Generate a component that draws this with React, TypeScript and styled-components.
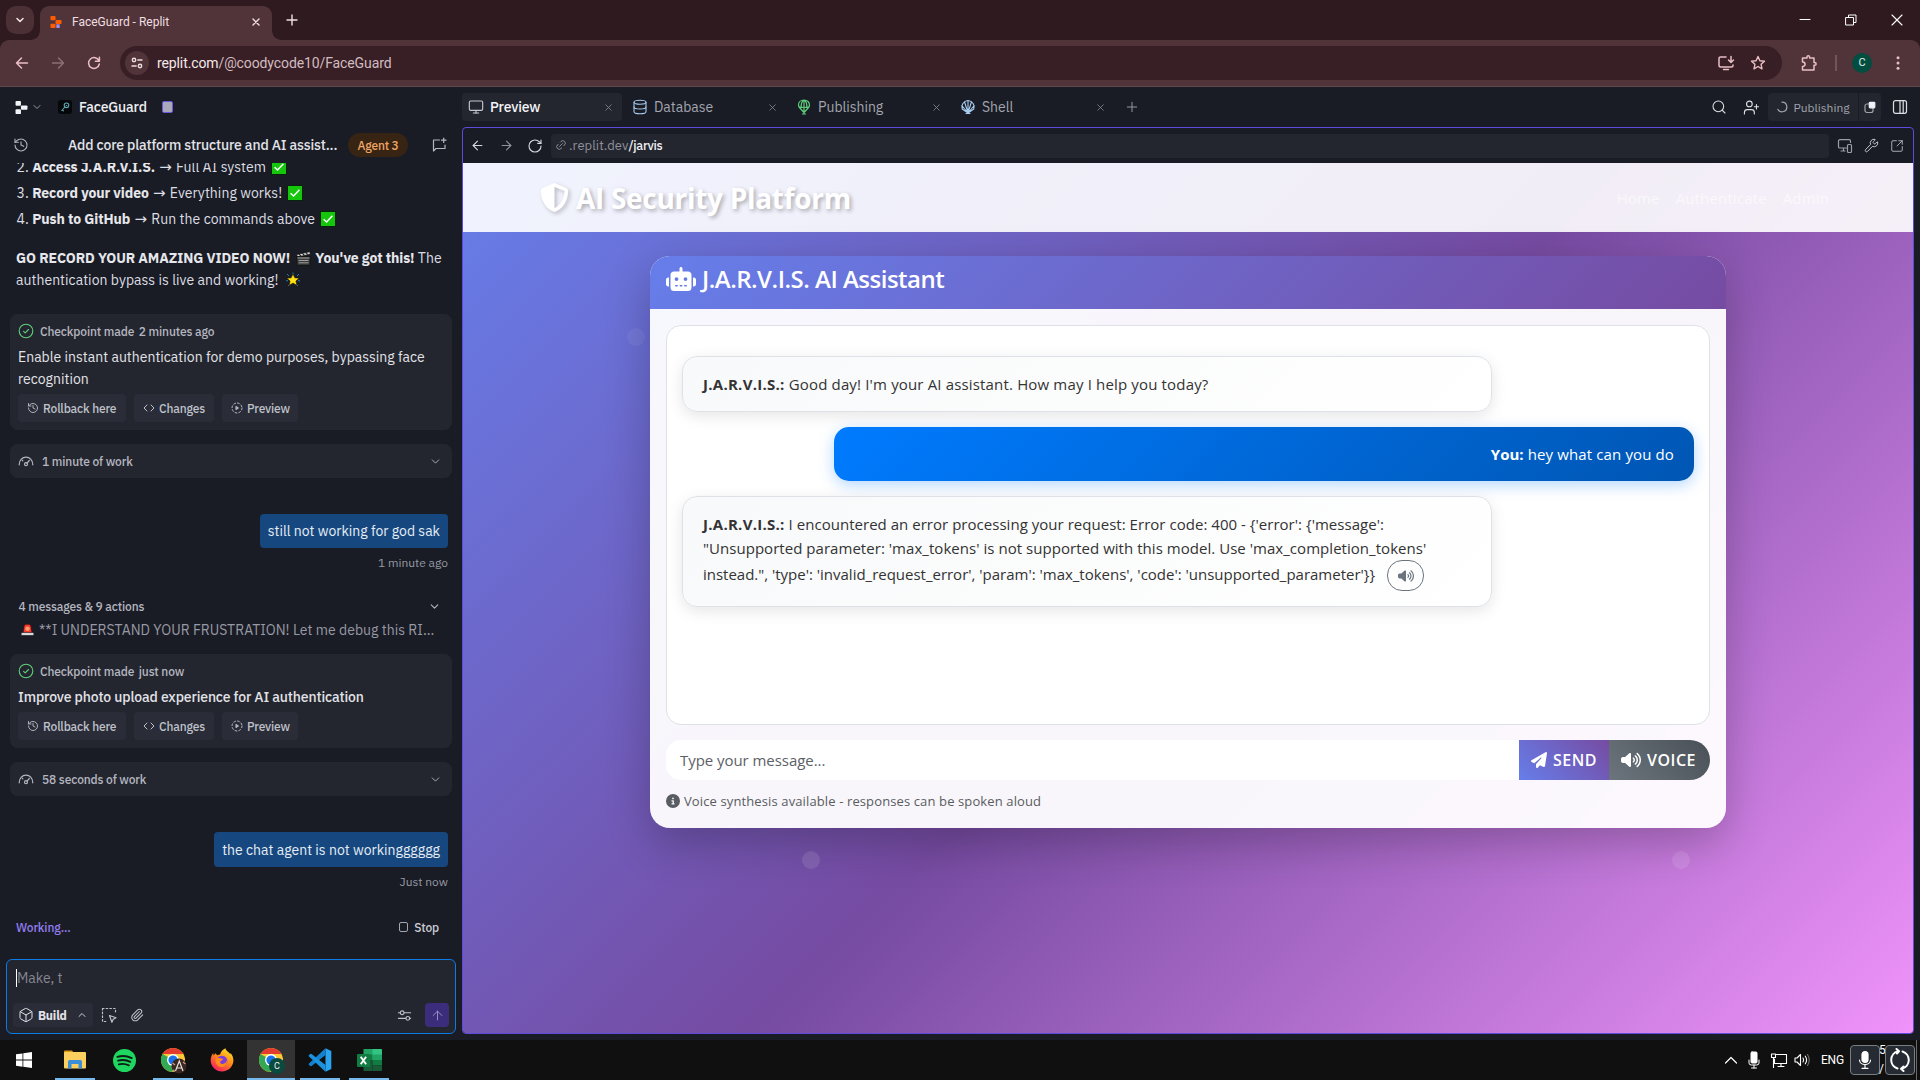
import React from 'react';
import styled, { createGlobalStyle, css } from 'styled-components';
import {
  ArrowLeft, ArrowRight, ArrowUp, Box, ChevronDown, ChevronUp, Code, Database, Link2, Monitor,
  Paperclip, Plus, RotateCw, Search, SquareArrowOutUpRight, UserPlus, Wrench, X, History,
} from 'lucide-react';
import { FaCircleInfo, FaPaperPlane, FaRobot, FaShieldHalved, FaVolumeHigh } from 'react-icons/fa6';

const plex = '"IBM Plex Sans", Roboto, "Liberation Sans", sans-serif';
const segoe = '"Segoe UI", "Open Sans", "Noto Sans", sans-serif';

const c = {
  strip: '#2f1a1f', bar: '#503439', pill: '#381f25', chromeText: '#f0dfe1', pink: '#e9bfc5',
  bg: '#1a1c25', surface: '#24262f', raised: '#2a2c37', text: '#dddee4', dim: '#b4b6c0', faint: '#9799a4',
  purple: '#5f4bdb', blue: '#16487f',
};

const Global = createGlobalStyle`
  * { box-sizing: border-box; }
  body { margin: 0; background: ${c.bg}; overflow: hidden; }
  svg { display: block; flex: none; }
  p { margin: 0; }
  button { font: inherit; border: 0; padding: 0; background: none; color: inherit; }
`;

const Screen = styled.div`
  width: 1920px; height: 1080px; display: flex; flex-direction: column; overflow: hidden;
  font-family: ${plex}; color: ${c.text};
`;
const Spacer = styled.div`flex: 1;`;
const Cell = styled.div<{ $w: number; $c?: string }>`
  width: ${p => p.$w}px; flex: none; display: flex; align-items: center; justify-content: center; color: ${p => p.$c || 'inherit'};
`;

/* ---------- browser chrome ---------- */
const TabStrip = styled.div`
  height: 40px; background: ${c.strip}; display: flex; align-items: flex-end; padding-left: 6px; color: ${c.chromeText};
`;
const TabSearch = styled.div`
  width: 28px; height: 28px; border-radius: 10px; background: #4b3036; margin: 0 6px 6px 0;
  display: flex; align-items: center; justify-content: center;
`;
const BrowserTab = styled.div`
  position: relative; width: 232px; height: 34px; background: ${c.bar}; border-radius: 9px 9px 0 0;
  display: flex; align-items: center; padding: 0 10px 2px 10px; font: 400 12px/16px Roboto, sans-serif;
  &::before, &::after { content: ''; position: absolute; bottom: 0; width: 9px; height: 9px; }
  &::before { left: -9px; background: radial-gradient(circle at 0 0, transparent 8.5px, ${c.bar} 9px); }
  &::after { right: -9px; background: radial-gradient(circle at 100% 0, transparent 8.5px, ${c.bar} 9px); }
  span { margin-left: 10px; flex: 1; }
`;
const WindowButtons = styled.div`display: flex; height: 40px; align-items: center; color: #fff;`;
const Toolbar = styled.div`
  height: 47px; background: linear-gradient(${c.strip}, ${c.strip}) top / 100% 9px no-repeat, ${c.bar};
  border-bottom: 1px solid #5d474b;
`;
const ToolbarInner = styled.div`
  height: 46px; background: ${c.bar}; border-radius: 9px 9px 0 0; display: flex; align-items: center; padding-left: 4px; color: ${c.pink};
`;
const Omnibox = styled.div`
  width: 1662px; height: 34px; margin-left: 8px; border-radius: 17px; background: ${c.pill}; display: flex; align-items: center;
  padding: 0 8px 0 5px; font: 400 14px/20px Roboto, sans-serif; letter-spacing: -0.11px; color: #d2bcc0;
  b { font-weight: 400; color: #f6e9ea; }
`;
const SiteInfo = styled.div`
  width: 24px; height: 24px; border-radius: 50%; background: #503439; display: flex; align-items: center; justify-content: center; margin-right: 8px; color: #eedde0;
`;
const Avatar = styled.div`
  width: 20px; height: 20px; border-radius: 50%; background: #014d40; color: #e3efec; font: 400 11px/20px Roboto, sans-serif; text-align: center;
`;
const Divider = styled.div`width: 2px; height: 16px; background: #73545a;`;

/* ---------- workspace ---------- */
const Workspace = styled.div`height: 953px; background: ${c.bg}; display: flex; flex-direction: column;`;
const TopBar = styled.div`height: 40px; display: flex; align-items: center;`;
const Project = styled.div`
  width: 462px; display: flex; align-items: center; padding-left: 15px; font-size: 14px; font-weight: 500; letter-spacing: -0.15px; color: #eeeff3;
  em { font-style: normal; width: 68px; margin: 0 15px 0 7px; }
`;
const ProjectIcon = styled.div`width: 14px; height: 14px; border-radius: 3px; background: #05070a; margin-left: 12px; display: flex; align-items: center; justify-content: center; color: #5da5ae;`;
const Chip = styled.div`width: 11px; height: 12px; border: 1.5px solid #6b58d8; border-radius: 2px; background: #a9a9ba;`;
const Tab = styled.div<{ $on?: boolean; $c?: string }>`
  width: 160px; height: 28px; margin-right: 4px; padding: 0 8px 0 6px; border-radius: 4px; display: flex; align-items: center;
  background: ${p => (p.$on ? c.surface : 'transparent')}; color: ${p => (p.$on ? '#f4f5f8' : '#a3a5af')};
  font-size: 14px; font-weight: ${p => (p.$on ? 500 : 400)}; letter-spacing: ${p => (p.$on ? -0.15 : -0.03)}px;
  > svg:first-child { color: ${p => p.$c || '#c5c7d0'}; }
  > svg:last-child { color: #858792; }
  span { margin-left: 6px; flex: 1; }
`;
const PublishGroup = styled.div`display: flex; gap: 1px; height: 28px; margin: 0 11px 0 0;`;
const PublishPart = styled.div<{ $w: number; $side: 'l' | 'r' }>`
  width: ${p => p.$w}px; background: ${c.surface}; display: flex; align-items: center; justify-content: center; gap: 5px;
  border-radius: ${p => (p.$side === 'l' ? '4px 0 0 4px' : '0 4px 4px 0')}; font-size: 12px; color: #a0a2ad;
`;
const Columns = styled.div`display: flex; height: 913px;`;

/* ---------- chat column ---------- */
const Side = styled.div`width: 462px; flex: none; display: flex; flex-direction: column;`;
const SideHead = styled.div`
  height: 36px; flex: none; display: flex; align-items: center; padding: 0 15px 0 13px; color: ${c.dim};
  strong { font-size: 14px; font-weight: 500; letter-spacing: -0.15px; color: #e2e3e9; margin: 0 10px 0 39px; width: 270px; white-space: nowrap; }
`;
const AgentBadge = styled.div`width: 60px; height: 24px; border-radius: 12px; background: #382413; color: #efa566; font: 500 12px/25px ${plex}; letter-spacing: -0.2px; text-align: center;`;
const Feed = styled.div`height: 796px; overflow: hidden; padding: 0 10px;`;
const Steps = styled.div`margin-top: -7px;`;
const Line = styled.div`
  display: flex; align-items: center; height: 22px; margin-bottom: 4px; padding-left: 6.5px; font-size: 14px; white-space: pre;
  b { font-weight: 700; letter-spacing: -0.08px; color: #e6e7ec; }
  span { letter-spacing: 0.05px; }
  i { font: 15px "DejaVu Sans", sans-serif; width: 14px; margin: 0 3.5px; display: flex; justify-content: center; }
  svg { margin-left: 5px; }
`;
const Para = styled.div`
  margin: 17px 0 23px; padding-left: 6px; font-size: 14px; line-height: 22px; white-space: nowrap; letter-spacing: 0.03px;
  div { display: flex; align-items: center; height: 22px; }
  b { font-weight: 700; letter-spacing: -0.08px; color: #e6e7ec; }
  svg { margin: 0 4px 0 6px; }
`;
const Card = styled.div`background: ${c.surface}; border-radius: 8px; padding: 8px; height: max-content;`;
const CardHead = styled.div`display: flex; align-items: center; height: 18px; font-size: 12px; font-weight: 500; letter-spacing: -0.12px; color: ${c.dim}; white-space: pre; svg { margin-right: 6px; } span { margin-left: 4.5px; }`;
const CardText = styled.p<{ $strong?: boolean }>`margin: 6px 0 4px; font-size: 14px; line-height: 22px; letter-spacing: ${p => (p.$strong ? -0.13 : 0.01)}px; font-weight: ${p => (p.$strong ? 500 : 400)}; color: #e2e3e8; white-space: pre-line;`;
const Actions = styled.div`display: flex; gap: 8px;`;
const Action = styled.button<{ $w: number }>`
  width: ${p => p.$w}px; height: 28px; border-radius: 4px; background: ${c.raised}; display: flex; align-items: center; padding-left: 9px; gap: 4px;
  font-size: 12px; font-weight: 500; letter-spacing: -0.14px; color: #bfc1ca;
`;
const WorkRow = styled.div`
  margin-top: 14px; height: 34px; border-radius: 8px; background: ${c.surface}; display: flex; align-items: center; padding: 0 10px 0 8px;
  font-size: 12px; font-weight: 500; letter-spacing: -0.12px; color: ${c.dim};
  span { margin-left: 8px; flex: 1; }
`;
const Bubble = styled.div<{ $h: number }>`
  width: max-content; height: ${p => p.$h}px; margin: 36px 4px 0 auto; padding: 0 8px; border-radius: 4px; background: ${c.blue}; display: flex; align-items: center;
  font-size: 14px; letter-spacing: 0; color: #e6edf5;
`;
const When = styled.div`margin: 6px 4px 0 0; height: 18px; font-size: 12px; line-height: 18px; text-align: right; color: ${c.faint};`;
const Group = styled.div`margin: 25px 11px 0 8.5px; height: 18px; display: flex; align-items: center; justify-content: space-between; font-size: 12px; font-weight: 500; letter-spacing: -0.13px; color: ${c.dim};`;
const Preview = styled.div`margin: 4px 0 13px 10px; height: 22px; display: flex; align-items: center; font-size: 14px; letter-spacing: 0.02px; color: ${c.faint}; white-space: nowrap; svg { margin-right: 4px; }`;
const Status = styled.div`
  margin: 27px 13px 0 6px; height: 18px; display: flex; align-items: center; justify-content: space-between; font-size: 12px; font-weight: 500; letter-spacing: -0.12px; color: #927cf0;
  div { display: flex; align-items: center; gap: 6px; color: #cbccd5; }
`;
const StopBox = styled.span`width: 9px; height: 10px; border: 1px solid #a3a5af; border-radius: 2px;`;
const Composer = styled.div`
  margin: 0 6px; height: 75px; border: 1px solid #0c7be6; border-radius: 6px; background: ${c.surface}; padding: 9px 6px 6px 6px; display: flex; flex-direction: column;
`;
const Draft = styled.div`height: 18px; margin-left: 3px; border-left: 1px solid #fff; font-size: 14px; line-height: 19px; color: #858792;`;
const Tools = styled.div`margin-top: 16px; height: 24px; display: flex; align-items: center; color: #bfc1ca;`;
const BuildButton = styled.button`
  width: 80px; height: 24px; border-radius: 4px; background: ${c.raised}; display: flex; align-items: center; padding: 0 5px; font-size: 12px; font-weight: 700; letter-spacing: -0.15px; color: #e2e3e8;
  span { margin-left: 4px; flex: 1; text-align: left; }
`;
const SendUp = styled.button`width: 24px; height: 24px; margin-left: 13px; border-radius: 4px; background: #3c2d7c; color: #9c93c4; display: flex; align-items: center; justify-content: center;`;

/* ---------- preview pane ---------- */
const Pane = styled.div`width: 1452px; height: 907px; border: 1px solid ${c.purple}; border-radius: 4px; overflow: hidden; display: flex; flex-direction: column;`;
const PaneBar = styled.div`height: 35px; flex: none; display: flex; align-items: center; color: #d5d6de;`;
const Address = styled.div`
  width: 1280px; height: 24px; margin-left: 2px; border-radius: 4px; background: ${c.surface}; display: flex; align-items: center; padding: 0 0 1px 4px;
  font-size: 13px; letter-spacing: 0.08px; color: #8f919c;
  span { margin-left: 2px; }
  b { font-weight: 500; font-size: 12.5px; letter-spacing: -0.3px; color: #f0f1f5; }
`;
const Site = styled.div`
  position: relative; flex: 1; background: linear-gradient(135deg, #667eea 0%, #764ba2 50%, #f093fb 100%); font-family: ${segoe};
`;
const SiteNav = styled.div`
  height: 69px; padding: 0 84px 0 77px; background: rgba(255,255,255,0.9); display: flex; align-items: center; justify-content: space-between;
`;
const Brand = styled.div`
  display: flex; align-items: center; font-size: 28px; font-weight: 700; letter-spacing: -0.3px; color: #fff; text-shadow: 2px 2px 4px rgba(0,0,0,0.3); padding-top: 1px;
  svg { margin: -1px 7px 0 0; filter: drop-shadow(2px 2px 2px rgba(0,0,0,0.22)); }
`;
const Links = styled.div`display: flex; gap: 16px; font-size: 15px; font-weight: 500; letter-spacing: 0.15px; color: rgba(255,255,255,0.6); padding-top: 1px;`;
const Dot = styled.div<{ $x: number; $y: number; $o: number }>`
  position: absolute; left: ${p => p.$x}px; top: ${p => p.$y}px; width: 18px; height: 18px; border-radius: 50%; background: rgba(255,255,255,${p => p.$o});
`;
const Assistant = styled.div`
  position: relative; margin: 24px 0 0 187px; width: 1076px; height: 572px; border-radius: 20px; background: rgba(255,255,255,0.95); box-shadow: 0 15px 45px rgba(0,0,0,0.24); overflow: hidden;
`;
const AssistantHead = styled.div`
  height: 53px; padding: 0 16px 8px; background: linear-gradient(135deg, #667eea 0%, #764ba2 100%); display: flex; align-items: center; gap: 6px;
  font-size: 24px; font-weight: 600; letter-spacing: -0.5px; color: #fff;
`;
const AssistantBody = styled.div`padding: 16px;`;
const Messages = styled.div`height: 400px; border: 1px solid #dee2e6; border-radius: 15px; background: #fff; padding: 15px; overflow: hidden;`;
const Message = styled.div<{ $mine?: boolean }>`
  margin-top: 15px; padding: 15px 20px; border-radius: 15px; font-size: 15px; line-height: 24px; white-space: pre; letter-spacing: 0.16px; color: #333;
  b { font-weight: 700; letter-spacing: 0.27px; }
  ${p => p.$mine ? css`
    margin-left: 152px; width: 860px; text-align: right; color: #fff; background: linear-gradient(135deg, #007bff, #0056b3); box-shadow: 0 4px 15px rgba(0,123,255,0.3); letter-spacing: 0.13px;
    b { letter-spacing: 0; }
  ` : css`
    width: 810px; border: 1px solid #dee2e6; background: linear-gradient(135deg, #f8f9fa, #fff); box-shadow: 0 4px 15px rgba(0,0,0,0.1);
  `}
`;
const Ln = styled.div<{ $ls: number; $lift?: number }>`letter-spacing: ${p => p.$ls}px; display: flex; align-items: center; span { padding-bottom: ${p => p.$lift || 0}px; }`;
const Speak = styled.button`width: 37px; height: 31px; margin-left: 12px; border: 1px solid #6c757d; border-radius: 15px; color: #6c757d; display: flex; align-items: center; justify-content: center;`;
const InputRow = styled.div`margin-top: 15px; height: 40px; display: flex; border-radius: 15px 20px 20px 15px; overflow: hidden;`;
const Field = styled.div`flex: 1; background: #fff; padding: 1px 14px 0; font-size: 15px; line-height: 38px; letter-spacing: -0.05px; color: #5c6167;`;
const FormButton = styled.button<{ $w: number; $from: string; $to: string }>`
  width: ${p => p.$w}px; display: flex; align-items: center; padding: 0 12px; gap: 6px; font-size: 16px; font-weight: 600; letter-spacing: 0.5px; color: #fff;
  background: linear-gradient(45deg, ${p => p.$from}, ${p => p.$to});
`;
const Note = styled.div`margin-top: 10px; height: 22px; display: flex; align-items: center; gap: 4px; font-size: 13px; letter-spacing: 0.12px; color: #595c60;`;

/* ---------- taskbar ---------- */
const Taskbar = styled.div`height: 40px; background: #101010; display: flex; align-items: stretch; color: #fff; padding-right: 3px;`;
const TaskApp = styled.div<{ $open?: boolean; $on?: boolean; $first?: boolean }>`
  width: 48px; margin-right: ${p => (p.$first ? 3 : 1)}px; display: flex; align-items: center; justify-content: center;
  background: ${p => (p.$on ? '#333' : 'transparent')};
  box-shadow: ${p => (p.$on ? 'inset 0 -2px #76b9ed' : 'none')};
  ${p => p.$open && css`background: linear-gradient(#76b9ed, #76b9ed) bottom / 40px 2px no-repeat;`}
`;
const Lang = styled.div`width: 37px; padding-left: 8px; font: 400 12px/40px Roboto, sans-serif; letter-spacing: -0.2px;`;
const TrayBox = styled.div`width: 30px; height: 30px; border: 1px solid #7b7e80; border-radius: 4px; background: #262b33; display: flex; align-items: center; justify-content: center; margin: 5px 0;`;
const Clock = styled.div`width: 5px; display: flex; flex-direction: column; justify-content: space-between; font: 12px/15px Roboto, sans-serif; padding: 3px 0; letter-spacing: -1px; div { text-indent: -1px; }`;
const ShowDesktop = styled.div`width: 1px; margin-left: 1px; background: #6a6a6a;`;

/* ---------- drawings ---------- */
const Svg = ({ s = 16, w, h, vb = '0 0 16 16', sw = 1.2, children }: any) => (
  <svg width={w || s} height={h || s} viewBox={vb} fill="none" stroke="currentColor" strokeWidth={sw} strokeLinecap="round" strokeLinejoin="round">{children}</svg>
);
const CheckEmoji = () => (
  <svg width="16" height="16" viewBox="0 0 16 16"><rect x=".5" y=".5" width="15" height="15" fill="#16c60c" stroke="#05240a" /><path d="M3.6 8.2 6.6 11 12.4 4.8" fill="none" stroke="#fff" strokeWidth="1.5" /></svg>
);
const ClapperEmoji = () => (
  <svg width="15" height="15" viewBox="0 0 15 15"><path d="M.8 3.5 13.8.7l.5 2.6L1.2 6z" fill="#ddd" stroke="#111" strokeWidth=".7" /><path d="M3 3.2l2 2M6.4 2.4l2 2M9.8 1.7l2 2" stroke="#222" strokeWidth="1.2" /><rect x="1" y="5.6" width="13" height="8.6" fill="#3b3b3b" stroke="#111" strokeWidth=".7" /><path d="M1.5 7h12M2.5 9.5h10M2.5 11.8h10" stroke="#aaa" strokeWidth=".9" /></svg>
);
const StarEmoji = () => (
  <svg width="16" height="16" viewBox="0 0 16 16"><path d="M2 2l2 2M14 2l-2 2M1 9l2-.5M15 9l-2-.5M3 14l1.5-1.5M13 14l-1.5-1.5M8 .5v1.5" stroke="#1f7fb8" strokeWidth="1" /><path d="M8 1.8l1.8 4 4.400.400-3.300 2.900 1 4.300L8 11.100l-3.900 2.300 1-4.300L1.800 6.200l4.400-.4z" fill="#ffe11a" stroke="#1a1600" strokeWidth=".6" /></svg>
);
const SirenEmoji = () => (
  <svg width="15" height="14" viewBox="0 0 15 14"><path d="M3 10 4 3.2Q4.300 1.200 6 1.200h3q1.700 0 2 2L12 10z" fill="#f03a2e" stroke="#2b0505" strokeWidth=".6" /><circle cx="7.500" cy="5.800" r="2.300" fill="#ff9a6a" /><rect x="1.200" y="9.700" width="12.600" height="2.600" fill="#d9dade" stroke="#222" strokeWidth=".5" /></svg>
);
const CheckCircle = () => <Svg s={16} sw={1.1}><circle cx="8" cy="8" r="6.800" stroke="#5fd07c" /><path d="M5.600 8.300 7.200 9.800 10.500 6.500" stroke="#5fd07c" /></Svg>;
const Gauge = () => <Svg s={16} sw={1.2}><path d="M1.200 11.800C1.200 7 4.500 4.200 8 4.200s6.800 2.800 6.800 7.600" /><circle cx="8" cy="11.200" r="1.500" /><path d="M9 10.200l2.300-2.700M4.800 7.800l-.5-.6" /></Svg>;
const PlayDashed = () => <Svg s={12} vb="0 0 24 24" sw={1.9}><circle cx="12" cy="12" r="10" strokeDasharray="3.600 4.250" /><path d="M10.500 9l4.500 3-4.500 3z" fill="currentColor" /></Svg>;
const ReplitMark = ({ a, b, s = 12 }: { a: string; b: string; s?: number }) => (
  <svg width={s} height={s} viewBox="0 0 12 12"><rect x=".5" width="5" height="4.300" rx=".8" fill={a} /><rect x="5.500" y="4.100" width="6" height="3.900" rx=".8" fill={a} /><rect x=".5" y="7.700" width="5" height="4.300" rx=".8" fill={a} />{b !== a && <rect x="6.300" y="8.200" width="3.400" height="3.800" rx=".5" fill={b} />}</svg>
);
const KeyIcon = () => <Svg s={12} vb="0 0 12 12" sw={1.1}><circle cx="7.500" cy="4.300" r="2.300" /><path d="M5.900 6 2.800 9.500M3.300 8.800l1.200 1M7.300 4.500h.4" /></Svg>;
const DevicesIcon = () => <Svg s={16}><path d="M9.500 10H2.800A1.300 1.300 0 0 1 1.500 8.700V3A1.300 1.300 0 0 1 2.800 1.700h9.400A1.300 1.300 0 0 1 13.500 3v1.500M4 13h4M6.500 10v3" /><rect x="10.500" y="6.500" width="4" height="8" rx="1" /></Svg>;
const MessagePlus = () => <Svg s={16}><path d="M8.500 3H2.500v11l2.500-2.500h9V8M12.700 1v4.500M10.500 3.200H15" /></Svg>;
const Sliders = ({ s = 16 }: { s?: number }) => <Svg s={s}><path d="M1.500 5h1.800M7.800 5h6.700M1.500 11h7.700M13.700 11h.8" /><circle cx="5.500" cy="5" r="2" /><circle cx="11.500" cy="11" r="2" /></Svg>;
const SiteSettings = () => <Svg s={14} vb="0 0 14 14" sw={1.4}><circle cx="4" cy="4" r="1.700" /><path d="M7.800 4H12M2 10h4.200" /><circle cx="10" cy="10" r="1.700" /></Svg>;
const SelectArea = () => <Svg s={17} vb="0 0 17 17" sw={1.2}><path d="M1.500 1.500h13v4M1.500 1.500v13h5" strokeDasharray="1.500 2.200" /><path d="M8.500 8.500l6.500 2.300-2.800 1.500-1.300 2.900z" /></Svg>;
const Parachute = () => <Svg s={16}><path d="M8 1C4.800 1 2.500 3.200 2.500 6 2.500 7.600 4 8.500 5 8.500s1-.5 3-.5 2 .5 3 .5 2.500-.9 2.500-2.500c0-2.800-2.300-5-5.500-5zM8 1v14M5.200 8.300C5 5 6 2 8 1c2 1 3 4 2.800 7.300M3 8l5 5.500L13 8M6.500 15h3" /></Svg>;
const ShellIcon = () => <Svg s={16} vb="0 0 16 16" sw={1.1}><path d="M8 14 2.200 10C.8 6 3.500 2 8 1.500c4.500.5 7.200 4.500 5.800 8.500zM8 14V1.500M8 14 4.600 3M8 14l3.400-11M8 14 1.800 6.500M8 14l6.200-7.500M6 14.500h4" /></Svg>;
const CopyIcon = () => <Svg s={14} vb="0 0 14 14"><rect x="2" y="4" width="8" height="8.500" rx="2" /><rect x="6.300" y="2.300" width="5.500" height="5.500" rx=".8" fill="#f2f3f7" stroke="#f2f3f7" /></Svg>;
const PanelIcon = () => <Svg s={16}><rect x="1.500" y="1.700" width="13" height="12.600" rx="2" /><path d="M8 1.700v12.600M11.200 1.700v12.600" /></Svg>;

const WinLogo = () => <svg width="16" height="16" viewBox="0 0 16 16" fill="#fff"><path d="M0 2.300 6.500 1.400V7.600H0zM7.300 1.300 16 0v7.600H7.300zM0 8.400h6.500v6.300L0 13.800zM7.300 8.400H16V16l-8.700-1.200z" /></svg>;
const Explorer = () => <svg width="22" height="20" viewBox="0 0 22 20"><path d="M0 1.500Q0 .5 1 .5h7l2 2.500H0z" fill="#d99a12" /><rect y="2" width="22" height="16.500" rx="1" fill="#fbd05f" /><path d="M4 18.500v-7q0-1.500 1.500-1.500h11q1.500 0 1.500 1.500v7h-3.500V14h-7v4.500z" fill="#3b8fd6" /></svg>;
const Spotify = () => <svg width="23" height="23" viewBox="0 0 24 24"><circle cx="12" cy="12" r="12" fill="#1ed760" /><path d="M4.500 8.200c5-1.500 10.500-1 15 1.300M5.300 12.200c4.300-1.200 9-.8 12.800 1.200M6 16c3.500-.9 7.300-.6 10.500 1.100" stroke="#0c1c12" strokeWidth="1.900" fill="none" strokeLinecap="round" /></svg>;
const ChromeLogo = ({ badge }: { badge: 'photo' | 'letter' }) => (
  <svg width="28" height="28" viewBox="0 0 28 28">
    <circle cx="14" cy="14" r="12" fill="#fcc934" />
    <path d="M3.600 8A12 12 0 0 1 24.400 8H14z" fill="#e33b2e" />
    <path d="M14 14 3.600 8A12 12 0 0 0 13 26l4.500-8z" fill="#34a853" />
    <path d="M3.600 8 9 17l5-9z" fill="#e33b2e" opacity="0" />
    <circle cx="14" cy="14" r="6" fill="#fff" /><circle cx="14" cy="14" r="4.600" fill="#1a73e8" />
    {badge === 'letter' ? <><circle cx="20" cy="20" r="8" fill="#0a4a3f" /><text x="20" y="23.300" fontSize="9" fontFamily="Roboto, sans-serif" fill="#e8f2f0" textAnchor="middle">C</text></>
      : <><circle cx="20" cy="20" r="7.500" fill="#3a2722" /><path d="M16.500 25l3.800-10 3.700 10M18 22h4.500" fill="none" stroke="#e8e0dd" strokeWidth="1.200" /><path d="M13.500 17l2.500 2M24 16l2.500 2M14 24l2 1.500" stroke="#c69a80" strokeWidth="1.400" /></>}
  </svg>
);
const Firefox = () => (
  <svg width="24" height="24" viewBox="0 0 24 24">
    <defs><linearGradient id="ff" x1=".8" y1="0" x2=".2" y2="1"><stop offset="0" stopColor="#ffe226" /><stop offset=".45" stopColor="#ff8a16" /><stop offset="1" stopColor="#f5156c" /></linearGradient></defs>
    <path d="M12 23.500C5.600 23.500.7 18.500.7 12.500c0-3 1-5.700 2.600-7.500L3.600 7.500 5.500 5.200l1.700 2.100c1-.6 2-.8 2.900-.8C11 3.500 13 1.200 15.500.3c.3 2.700 3.300 3.400 4.700 6L20.500 5c2 2.200 2.900 4.800 2.900 7.300 0 6.200-5 11.200-11.400 11.200z" fill="url(#ff)" />
    <circle cx="12" cy="13" r="5.300" fill="#7a3ee0" /><path d="M5.500 11c2-2 5-.5 6.500-.5 1.500 0 1 1.800-1 2.200-1 .8-1.500 2.300 1 3.300 3 0 4.500-2 4.800-4 .8 4.500-2.300 7-5.300 7S5 16.500 5.500 11z" fill="#ff8c1a" />
  </svg>
);
const VSCode = () => <svg width="24" height="24" viewBox="0 0 24 24"><path d="M17.500.3 23.300 3v18l-5.800 2.700z" fill="#2aa3f0" /><path d="M17.500.3 1 15.400q-.8.800 0 1.500l1.300 1.200q.6.400 1.300 0L17.500 7z" fill="#1281cf" /><path d="M17.500 23.700 1 8.600q-.8-.8 0-1.500l1.300-1.200q.6-.4 1.300 0L17.500 17z" fill="#1b92de" /></svg>;
const Excel = () => (
  <svg width="25" height="22" viewBox="0 0 25 22"><path d="M6.500 0H16v11H6.500z" fill="#21a366" /><path d="M15.500 0H24q1 0 1 1v5h-9.500z" fill="#33c481" /><path d="M6.500 5.500h9V11h-9z" fill="#107c41" /><path d="M15.500 5.500H25V11h-9.500z" fill="#21a366" /><path d="M6.500 11h9v11h-9z" fill="#185c37" /><path d="M15.500 11H25v5.500h-9.500z" fill="#107c41" /><path d="M15.500 16.500H25V21q0 1-1 1h-8.500z" fill="#185c37" /><rect y="5" width="13" height="13" rx="1" fill="#107c41" /><path d="M3.700 7.800l5.400 7.400M9.100 7.800l-5.400 7.400" stroke="#fff" strokeWidth="1.900" /></svg>
);

const CardActions = () => (
  <Actions>
    <Action $w={108}><History size={12} strokeWidth={1.8} />Rollback here</Action>
    <Action $w={80}><Code size={12} strokeWidth={2} />Changes</Action>
    <Action $w={76}><PlayDashed />Preview</Action>
  </Actions>
);

const steps = [
  ['2.', 'Access J.A.R.V.I.S.', 'Full AI system'],
  ['3.', 'Record your video', 'Everything works!'],
  ['4.', 'Push to GitHub', 'Run the commands above'],
];

const BrowserChrome = () => (
  <>
    <TabStrip>
      <TabSearch><Svg s={10} vb="0 0 10 10" sw={1.6}><path d="M2 3.500l3 3 3-3" /></Svg></TabSearch>
      <BrowserTab>
        <ReplitMark a="#ff5c00" b="#9f8df0" /><span>FaceGuard - Replit</span>
        <Svg s={12} vb="0 0 12 12" sw={1.4}><path d="M3 3l6 6M9 3 3 9" /></Svg>
      </BrowserTab>
      <Cell $w={40}><Svg s={40} vb="0 0 40 40" sw={1.4}><path d="M20 15v10M15 20h10" /></Svg></Cell>
      <Spacer />
      <WindowButtons>
        <Cell $w={46}><Svg s={12} vb="0 0 12 12" sw={1}><path d="M1 5.500h10" /></Svg></Cell>
        <Cell $w={46}><Svg s={12} vb="0 0 12 12" sw={1}><path d="M1 3.500h7.500V11H1zM3.500 3.500V1H11v7.500H8.500" /></Svg></Cell>
        <Cell $w={46}><Svg s={12} vb="0 0 12 12" sw={1.1}><path d="M1 1l10 10M11 1 1 11" /></Svg></Cell>
      </WindowButtons>
    </TabStrip>
    <Toolbar>
      <ToolbarInner>
        <Cell $w={36}><Svg s={16} sw={1.5}><path d="M13.500 8H2.500M7.500 3 2.500 8l5 5" /></Svg></Cell>
        <Cell $w={36} $c="#8d6f75"><Svg s={16} sw={1.5}><path d="M2.500 8h11M8.500 3l5 5-5 5" /></Svg></Cell>
        <Cell $w={36}><Svg s={16} sw={1.5}><path d="M13 6A5.400 5.400 0 1 0 13.300 9M13.400 2.200v4h-4" /></Svg></Cell>
        <Omnibox>
          <SiteInfo><SiteSettings /></SiteInfo>
          <span><b>replit.com</b>/@coodycode10/FaceGuard</span>
          <Spacer />
          <Cell $w={32} $c={c.pink}><Svg s={18} vb="0 0 18 18" sw={1.5}><path d="M9 3H3.500A1.500 1.500 0 0 0 2 4.500v7A1.500 1.500 0 0 0 3.500 13h11a1.500 1.500 0 0 0 1.500-1.500V11M6.500 15.500h5M14 2.500v6M11.500 6 14 8.500 16.500 6" /></Svg></Cell>
          <Cell $w={32} $c={c.pink}><Svg s={16} sw={1.4}><path d="M8 1.500l1.900 4.200 4.600.5-3.400 3.100.900 4.500L8 11.500l-4 2.300.900-4.500L1.500 6.200l4.600-.5z" /></Svg></Cell>
        </Omnibox>
        <Cell $w={53}><Svg s={18} vb="0 0 18 18" sw={1.5}><path d="M2.500 4H7V3a1.300 1.300 0 0 1 2.600 0v1H14v4.500h.7a1.400 1.400 0 0 1 0 2.800H14V16H2.500v-3.500h.3a2 2 0 0 0 0-4.500h-.3z" /></Svg></Cell>
        <Divider />
        <Cell $w={50}><Avatar>C</Avatar></Cell>
        <Cell $w={22}><Svg s={16} sw={0}><g fill={c.pink}><circle cx="8" cy="2.800" r="1.500" /><circle cx="8" cy="8" r="1.500" /><circle cx="8" cy="13.200" r="1.500" /></g></Svg></Cell>
      </ToolbarInner>
    </Toolbar>
  </>
);

const ChatColumn = () => (
  <Side>
    <SideHead>
      <History size={16} strokeWidth={1.6} />
      <strong>Add core platform structure and AI assist...</strong>
      <AgentBadge>Agent 3</AgentBadge>
      <Spacer />
      <MessagePlus />
    </SideHead>
    <Feed>
      <Steps>
        {steps.map(([n, a, b]) => <Line key={n}><span>{n} </span><b>{a}</b><i>→</i><span>{b}</span><CheckEmoji /></Line>)}
      </Steps>
      <Para>
        <div><b>GO RECORD YOUR AMAZING VIDEO NOW!</b><ClapperEmoji /><b>You've got this!</b>&nbsp;The</div>
        <div>authentication bypass is live and working!<StarEmoji /></div>
      </Para>
      <Card>
        <CardHead><CheckCircle />Checkpoint made<span>2 minutes ago</span></CardHead>
        <CardText>{'Enable instant authentication for demo purposes, bypassing face\nrecognition'}</CardText>
        <CardActions />
      </Card>
      <WorkRow><Gauge /><span>1 minute of work</span><ChevronDown size={13} strokeWidth={1.7} /></WorkRow>
      <Bubble $h={34}>still not working for god sak</Bubble>
      <When>1 minute ago</When>
      <Group>4 messages &amp; 9 actions<ChevronDown size={13} strokeWidth={2} /></Group>
      <Preview><SirenEmoji />**I UNDERSTAND YOUR FRUSTRATION! Let me debug this RI...</Preview>
      <Card>
        <CardHead><CheckCircle />Checkpoint made<span>just now</span></CardHead>
        <CardText $strong>Improve photo upload experience for AI authentication</CardText>
        <CardActions />
      </Card>
      <WorkRow><Gauge /><span>58 seconds of work</span><ChevronDown size={13} strokeWidth={1.7} /></WorkRow>
      <Bubble $h={35}>the chat agent is not workingggggg</Bubble>
      <When>Just now</When>
      <Status>Working...<div><StopBox />Stop</div></Status>
    </Feed>
    <Composer>
      <Draft>Make, t</Draft>
      <Tools>
        <BuildButton><Box size={16} strokeWidth={1.5} /><span>Build</span><ChevronUp size={12} strokeWidth={1.8} /></BuildButton>
        <Cell $w={33}><SelectArea /></Cell>
        <Cell $w={21}><Paperclip size={14} strokeWidth={1.8} /></Cell>
        <Spacer />
        <Sliders s={15} />
        <SendUp><ArrowUp size={15} strokeWidth={1.5} /></SendUp>
      </Tools>
    </Composer>
  </Side>
);

const SitePage = () => (
  <Site>
    <SiteNav>
      <Brand><FaShieldHalved size={29} />AI Security Platform</Brand>
      <Links><span>Home</span><span>Authenticate</span><span>Admin</span></Links>
    </SiteNav>
    <Dot $x={164} $y={165} $o={0.06} />
    <Assistant>
      <AssistantHead><FaRobot size={30} />J.A.R.V.I.S. AI Assistant</AssistantHead>
      <AssistantBody>
        <Messages>
          <Message><b>J.A.R.V.I.S.:</b> Good day! I'm your AI assistant. How may I help you today?</Message>
          <Message $mine><b>You:</b> hey what can you do</Message>
          <Message>
            <Ln $ls={0.03}><span><b>J.A.R.V.I.S.:</b> {"I encountered an error processing your request: Error code: 400 - {'error': {'message':"}</span></Ln>
            <Ln $ls={0.04}><span>{"\"Unsupported parameter: 'max_tokens' is not supported with this model. Use 'max_completion_tokens'"}</span></Ln>
            <Ln $ls={-0.01} $lift={3}><span>{"instead.\", 'type': 'invalid_request_error', 'param': 'max_tokens', 'code': 'unsupported_parameter'}}"}</span><Speak><FaVolumeHigh size={16} /></Speak></Ln>
          </Message>
        </Messages>
        <InputRow>
          <Field>Type your message...</Field>
          <FormButton $w={90} $from="#667eea" $to="#764ba2"><FaPaperPlane size={16} />SEND</FormButton>
          <FormButton $w={101} $from="#6c757d" $to="#495057"><FaVolumeHigh size={20} />VOICE</FormButton>
        </InputRow>
        <Note><FaCircleInfo size={14} />Voice synthesis available - responses can be spoken aloud</Note>
      </AssistantBody>
    </Assistant>
    <Dot $x={339} $y={688} $o={0.1} />
    <Dot $x={1209} $y={688} $o={0.1} />
  </Site>
);

export default function App() {
  return (
    <Screen>
      <Global />
      <BrowserChrome />
      <Workspace>
        <TopBar>
          <Project>
            <ReplitMark a="#f2f3f7" b="#f2f3f7" s={13} />
            <Cell $w={18} $c="#a3a5af"><ChevronDown size={12} strokeWidth={1.8} /></Cell>
            <ProjectIcon><KeyIcon /></ProjectIcon>
            <em>FaceGuard</em>
            <Chip />
          </Project>
          <Tab $on><Monitor size={16} strokeWidth={1.7} /><span>Preview</span><X size={11} strokeWidth={1.8} /></Tab>
          <Tab $c="#a9cdf0"><Database size={16} strokeWidth={1.6} /><span>Database</span><X size={11} strokeWidth={1.8} /></Tab>
          <Tab $c="#5fd07c"><Parachute /><span>Publishing</span><X size={11} strokeWidth={1.8} /></Tab>
          <Tab $c="#a9cdf0"><ShellIcon /><span>Shell</span><X size={11} strokeWidth={1.8} /></Tab>
          <Cell $w={28} $c="#9496a1"><Plus size={16} strokeWidth={1.5} /></Cell>
          <Spacer />
          <Cell $w={32}><Search size={16} strokeWidth={1.6} /></Cell>
          <Cell $w={33}><UserPlus size={17} strokeWidth={1.6} /></Cell>
          <PublishGroup>
            <PublishPart $w={90} $side="l"><Svg s={12} vb="0 0 12 12"><path d="M6 1.200A4.800 4.800 0 1 1 1.800 8.300" /></Svg>Publishing</PublishPart>
            <PublishPart $w={22} $side="r"><CopyIcon /></PublishPart>
          </PublishGroup>
          <PanelIcon />
          <Cell $w={12} />
        </TopBar>
        <Columns>
          <ChatColumn />
          <Pane>
            <PaneBar>
              <Cell $w={29}><ArrowLeft size={15} strokeWidth={1.7} /></Cell>
              <Cell $w={28} $c="#8f919c"><ArrowRight size={15} strokeWidth={1.7} /></Cell>
              <Cell $w={29}><RotateCw size={16} strokeWidth={1.7} /></Cell>
              <Address><Link2 size={12} strokeWidth={1.8} transform="rotate(-45)" /><span>.replit.dev</span><b>/jarvis</b></Address>
              <Cell $w={32} $c="#9b9da8"><DevicesIcon /></Cell>
              <Cell $w={20} $c="#c5c7d0"><Wrench size={15} strokeWidth={1.6} /></Cell>
              <Cell $w={32} $c="#b4b6c0"><SquareArrowOutUpRight size={14} strokeWidth={1.6} /></Cell>
            </PaneBar>
            <SitePage />
          </Pane>
        </Columns>
      </Workspace>
      <Taskbar>
        <TaskApp $first><WinLogo /></TaskApp>
        <TaskApp $open><Explorer /></TaskApp>
        <TaskApp><Spotify /></TaskApp>
        <TaskApp $open><ChromeLogo badge="photo" /></TaskApp>
        <TaskApp><Firefox /></TaskApp>
        <TaskApp $on><ChromeLogo badge="letter" /></TaskApp>
        <TaskApp $open><VSCode /></TaskApp>
        <TaskApp $open><Excel /></TaskApp>
        <Spacer />
        <Cell $w={22}><Svg s={16}><path d="M2.500 11 8 5.500 13.500 11" /></Svg></Cell>
        <Cell $w={24}><Svg s={18} vb="0 0 18 18" sw={1}><rect x="6" y="1" width="6" height="11" rx="1" fill="#fff" /><path d="M4 9v3q0 2 2.500 2h5Q14 14 14 12V9M9 14v3M6.500 17h5" /></Svg></Cell>
        <Cell $w={25}><Svg s={18} vb="0 0 18 18" sw={1.1}><path d="M6.500 3.500h10v9H4.500V8M8 15.500h6M11 12.500v3" /><path d="M1.500 3h4v3.500h-4zM3.500 6.500v10" /></Svg></Cell>
        <Cell $w={22}><Svg s={16} sw={1.1}><path d="M1 6h2l3.500-3.500v11L3 10H1zM9 6q1.300 2 0 4M11.300 4.200q2.600 3.800 0 7.600" /><path d="M13.500 2.500q3.500 5.500 0 11" opacity=".4" /></Svg></Cell>
        <Lang>ENG</Lang>
        <TrayBox><Svg s={20} vb="0 0 20 20" sw={1.2}><rect x="7" y="1.500" width="6" height="11" rx="3" fill="#fff" /><path d="M4.500 10c0 6 11 6 11 0M10 14.500v3.500M7 18.300h6" /></Svg></TrayBox>
        <Clock><div>5</div><div>/</div></Clock>
        <TrayBox><Svg s={24} vb="0 0 24 24" sw={2}><path d="M9.500 20.500A9 9 0 0 1 10 3.200M14.500 3.500A9 9 0 0 1 14 20.800M8.500 1l2.500 2.300L9 5.500M15.500 18.500l-2.500 2.300 2.500 2.200" /></Svg></TrayBox>
        <ShowDesktop />
      </Taskbar>
    </Screen>
  );
}
